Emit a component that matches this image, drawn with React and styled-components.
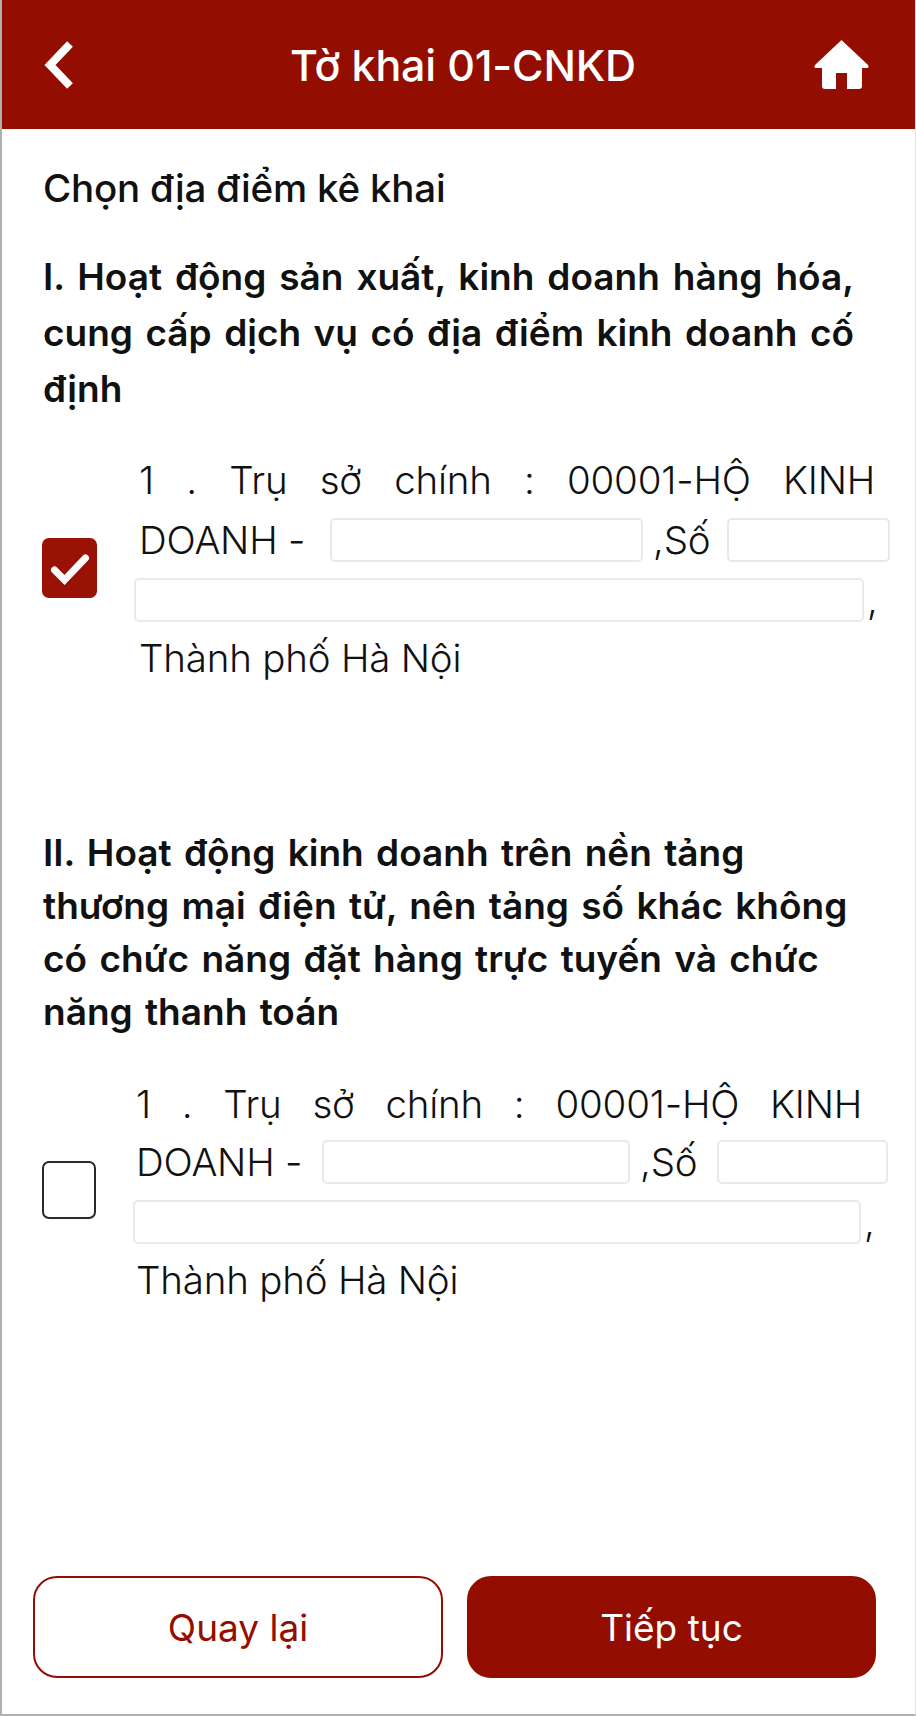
import React from 'react';
import styled, { createGlobalStyle } from 'styled-components';

const RED = '#930d00';

const GlobalStyle = createGlobalStyle`
  html, body {
    margin: 0;
    padding: 0;
    background: #fff;
  }
  * {
    box-sizing: border-box;
  }
`;

const Page = styled.div`
  width: 916px;
  height: 1716px;
  display: flex;
  flex-direction: column;
  font-family: Inter, "Noto Sans", sans-serif;
  color: #111;
  background: #fff;
  border-left: 2px solid #b0b0b0;
  border-right: 1px solid #e2e2e2;
  border-bottom: 2px solid #b0b0b0;
  overflow: hidden;
`;

const Header = styled.header`
  height: 129px;
  flex: none;
  margin: 0 -1px 0 -2px;
  padding: 0 47px 0 44px;
  display: flex;
  align-items: center;
  justify-content: space-between;
  background: ${RED};
  color: #fff;
`;

const HeaderTitle = styled.h1`
  margin: 0 0 0 38px;
  font-size: 43px;
  font-weight: 500;
  letter-spacing: -0.2px;
`;

const Content = styled.main`
  flex: 1;
  padding: 37px 20px 0 41px;
  display: flex;
  flex-direction: column;
`;

const PageTitle = styled.div`
  font-size: 38.5px;
  font-weight: 500;
  line-height: 44px;
  letter-spacing: -0.2px;
  margin-bottom: 39px;
`;

const SectionHeading = styled.h2`
  margin: ${(p) => p.$top || 0}px 0 0;
  width: 811px;
  font-size: 37px;
  line-height: ${(p) => p.$lineHeight}px;
  font-weight: 600;
  word-spacing: 3px;
  text-align: justify;
`;

const SectionLine = styled.span`
  display: block;
  white-space: nowrap;
`;

const Item = styled.div`
  display: flex;
  align-items: center;
  margin: ${(p) => p.$top}px 0 0 -1px;
`;

const CheckBox = styled.span`
  flex: none;
  width: ${(p) => (p.$checked ? 55 : 54)}px;
  height: ${(p) => (p.$checked ? 60 : 58)}px;
  margin-bottom: ${(p) => (p.$checked ? 4 : 6)}px;
  border-radius: 7px;
  display: flex;
  align-items: center;
  justify-content: center;
  background: ${(p) => (p.$checked ? '#9a1206' : '#fff')};
  border: ${(p) => (p.$checked ? 'none' : '2px solid #2a2a2a')};
`;

const ItemBody = styled.div`
  width: 760px;
  margin-left: 37px;
  font-size: 38.5px;
  font-weight: 300;
  letter-spacing: -0.2px;
  display: flex;
  flex-direction: column;
`;

const TextLine = styled.div`
  height: ${(p) => p.$height}px;
  line-height: ${(p) => p.$height}px;
  padding-left: ${(p) => p.$left}px;
  padding-right: ${(p) => p.$right || 0}px;
  text-align-last: ${(p) => (p.$justify ? 'justify' : 'left')};
  white-space: nowrap;
`;

const FieldLine = styled.div`
  display: flex;
  align-items: center;
  height: ${(p) => p.$height}px;
  padding-left: ${(p) => p.$left || 0}px;
`;

const Label = styled.span`
  flex: none;
  width: ${(p) => p.$width}px;
  padding-left: ${(p) => p.$left || 0}px;
  white-space: nowrap;
`;

const Field = styled.span`
  display: block;
  flex: none;
  width: ${(p) => p.$width}px;
  height: 44px;
  border: 2px solid #e9e9e9;
  border-radius: 5px;
  background: #fff;
`;

const Footer = styled.footer`
  margin-top: auto;
  padding: 0 39px 36px 31px;
  display: flex;
  justify-content: space-between;
`;

const Button = styled.button`
  width: ${(p) => (p.$primary ? 409 : 410)}px;
  height: 102px;
  border-radius: 24px;
  border: 2px solid ${RED};
  background: ${(p) => (p.$primary ? RED : '#fff')};
  color: ${(p) => (p.$primary ? '#fff' : RED)};
  font-family: inherit;
  font-size: 37px;
  font-weight: 400;
`;

const BackIcon = () => (
  <svg width="30" height="50" viewBox="0 0 30 50" fill="none">
    <path d="M26 4 L6 25 L26 46" stroke="#fff" strokeWidth="8" />
  </svg>
);

const HomeIcon = () => (
  <svg width="55" height="49" viewBox="0 0 55 49" fill="#fff">
    <path d="M27.5 0 L54 25 Q55.5 28 53 28 H48 V46 Q48 49 45 49 H33 V33 H22 V49 H11 Q8 49 8 46 V28 H2 Q-0.5 28 1 25 Z" />
  </svg>
);

const CheckIcon = () => (
  <svg width="40" height="34" viewBox="0 0 40 34" fill="none">
    <path d="M4.5 19 L14.5 29 L35.5 7" stroke="#fff" strokeWidth="7" strokeLinecap="round" />
  </svg>
);

const LocationItem = ({ checked, top, line, labels, fields }) => (
  <Item $top={top}>
    <CheckBox $checked={checked}>{checked && <CheckIcon />}</CheckBox>
    <ItemBody>
      <TextLine $justify $height={line.height} $left={line.left} $right={line.right}>
        1 . Trụ sở chính : 00001-HỘ KINH
      </TextLine>
      <FieldLine $height={60} $left={line.left}>
        <Label $width={labels[0]}>DOANH -</Label>
        <Field $width={fields[0]} />
        <Label $width={labels[1]} $left={10}>,Số</Label>
        <Field $width={fields[1]} />
      </FieldLine>
      <FieldLine $height={59}>
        <Field $width={fields[2]} />
        <Label $width={20} $left={3}>,</Label>
      </FieldLine>
      <TextLine $height={59} $left={line.left}>Thành phố Hà Nội</TextLine>
    </ItemBody>
  </Item>
);

const App = () => (
  <>
    <GlobalStyle />
    <Page>
      <Header>
        <BackIcon />
        <HeaderTitle>Tờ khai 01-CNKD</HeaderTitle>
        <HomeIcon />
      </Header>
      <Content>
        <PageTitle>Chọn địa điểm kê khai</PageTitle>
        <SectionHeading $lineHeight={56}>
          I. Hoạt động sản xuất, kinh doanh hàng hóa, cung cấp dịch vụ có địa điểm kinh doanh cố định
        </SectionHeading>
        <LocationItem
          checked
          top={34}
          line={{ height: 59, left: 5, right: 19 }}
          labels={[191, 84]}
          fields={[313, 163, 730]}
        />
        <SectionHeading $top={138} $lineHeight={53}>
          <SectionLine>II. Hoạt động kinh doanh trên nền tảng</SectionLine>
          <SectionLine>thương mại điện tử, nên tảng số khác không</SectionLine>
          <SectionLine>có chức năng đặt hàng trực tuyến và chức</SectionLine>
          <SectionLine>năng thanh toán</SectionLine>
        </SectionHeading>
        <LocationItem
          top={38}
          line={{ height: 56, left: 3, right: 31 }}
          labels={[186, 87]}
          fields={[308, 171, 728]}
        />
      </Content>
      <Footer>
        <Button>Quay lại</Button>
        <Button $primary>Tiếp tục</Button>
      </Footer>
    </Page>
  </>
);

export default App;
